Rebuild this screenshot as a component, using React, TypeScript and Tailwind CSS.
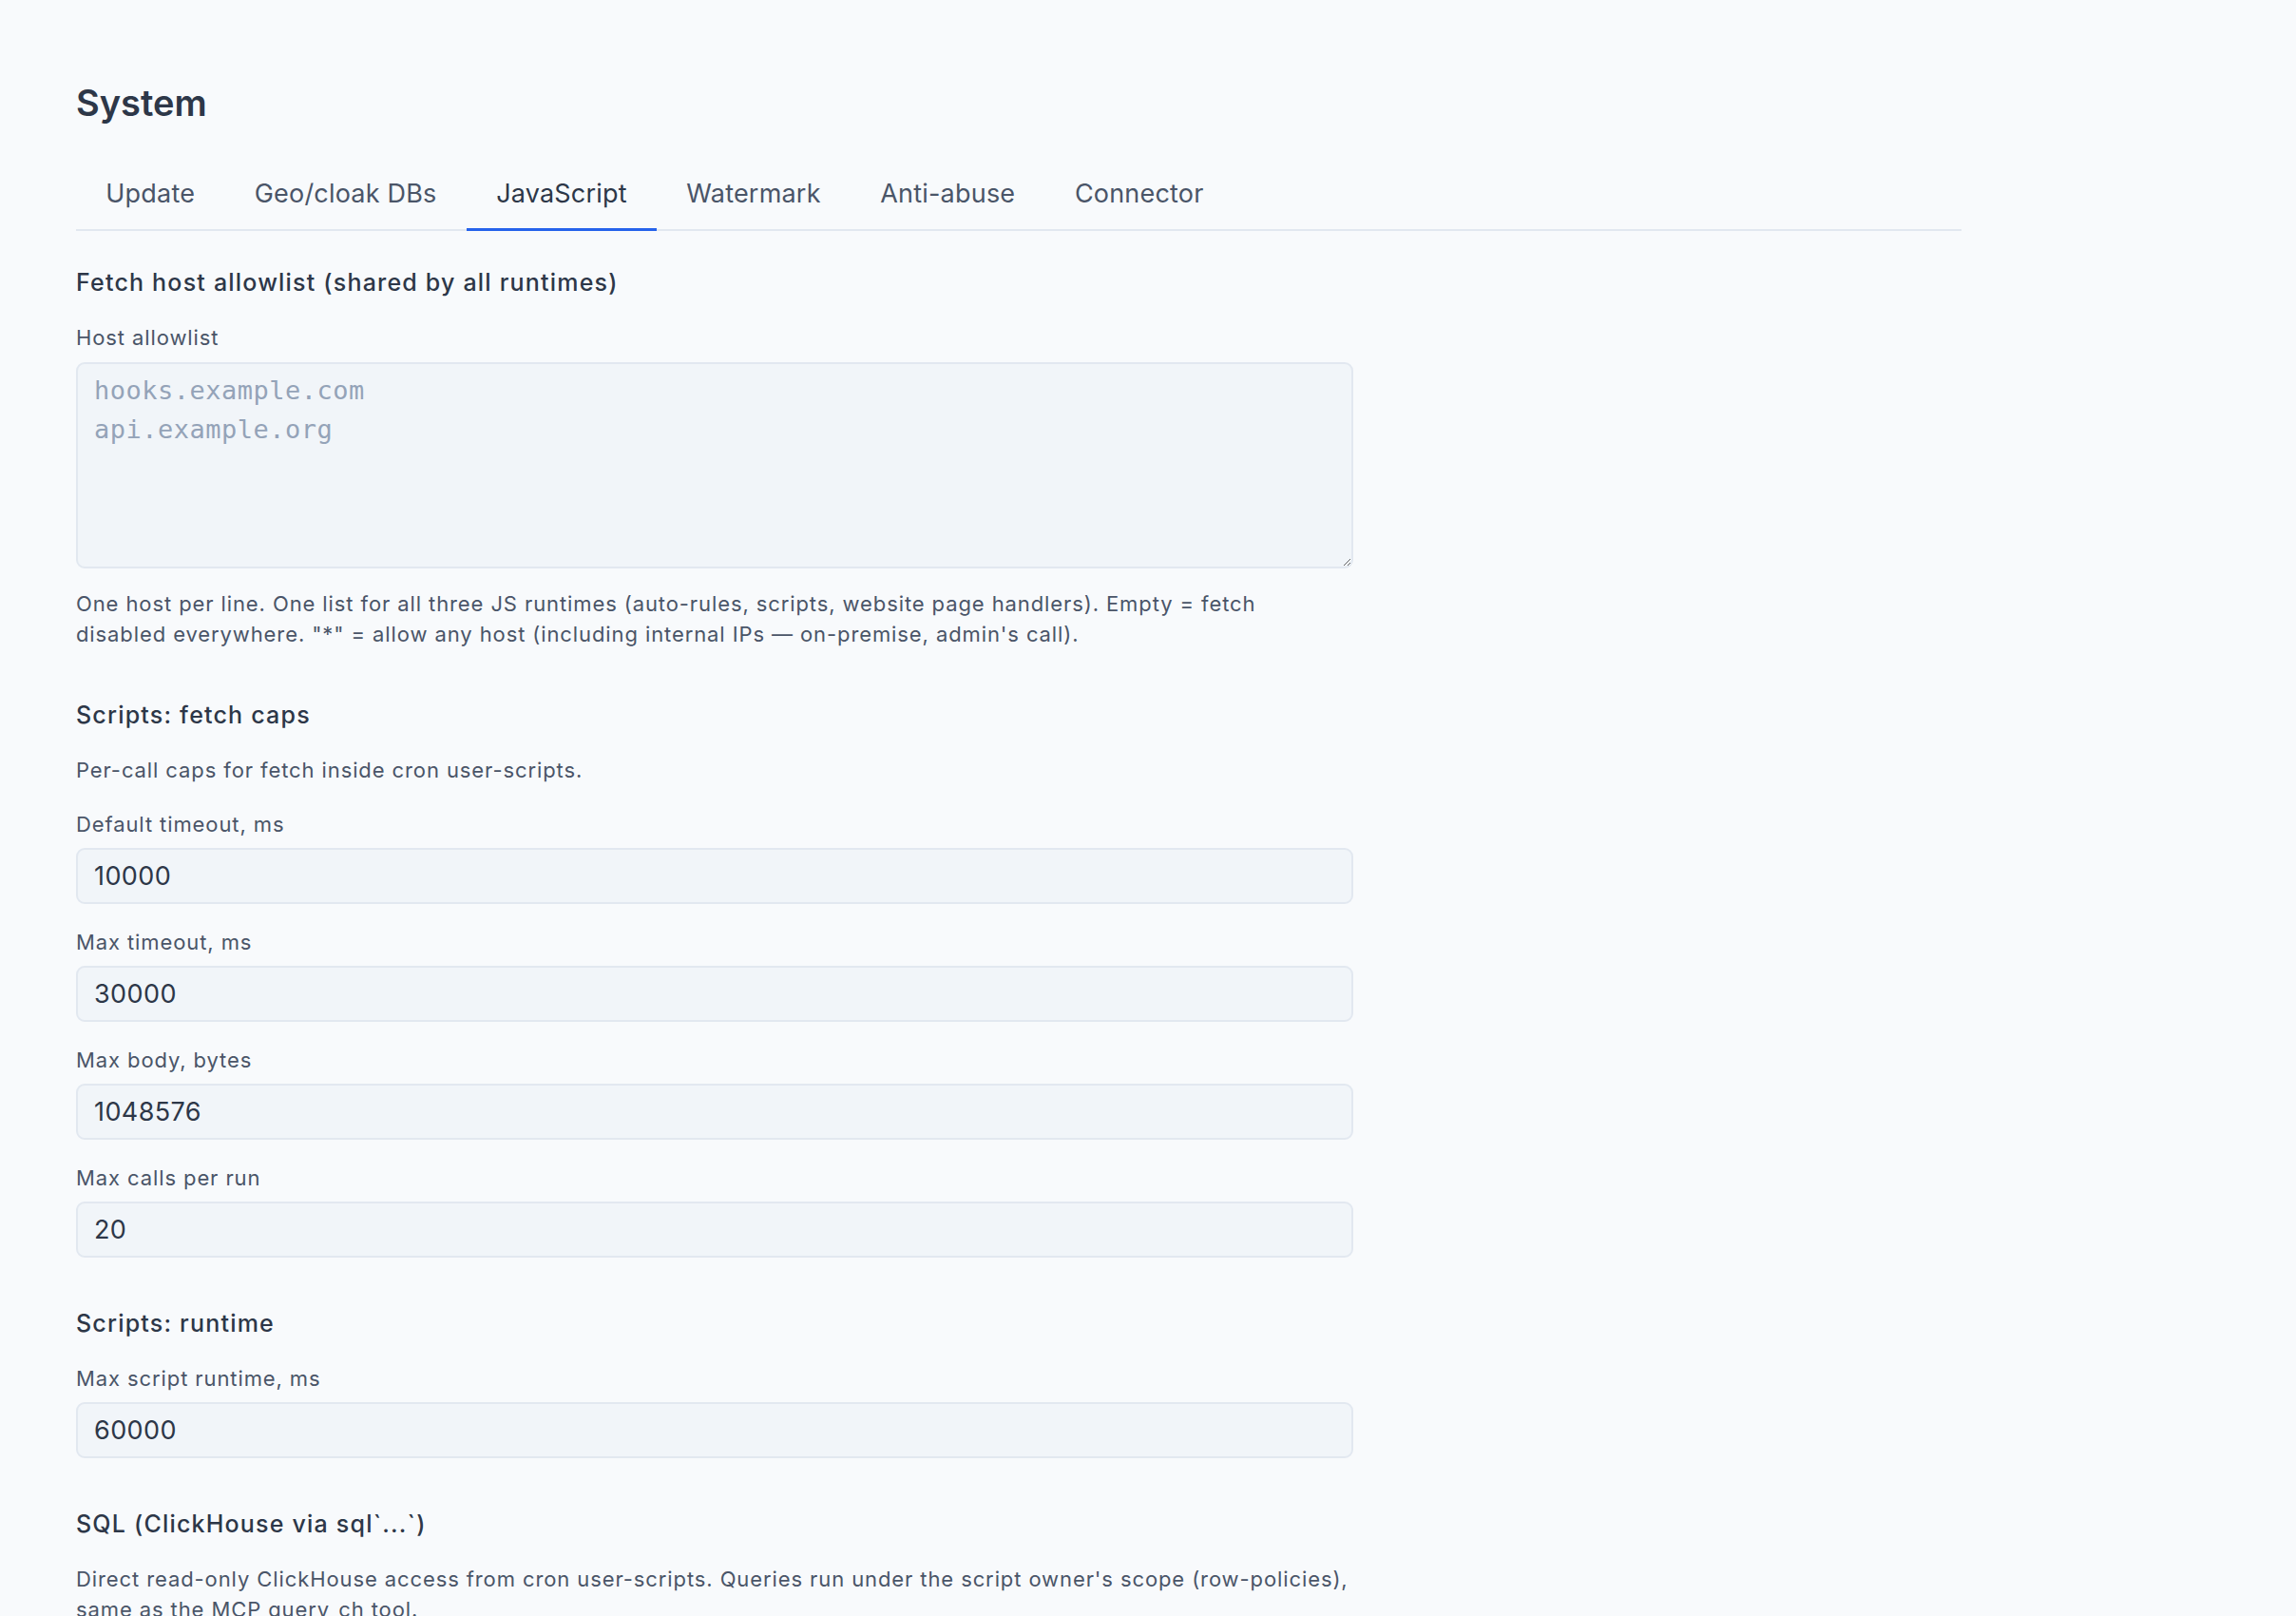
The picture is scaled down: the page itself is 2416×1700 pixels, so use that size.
import React from "react";

const tabs = ["Update", "Geo/cloak DBs", "JavaScript", "Watermark", "Anti-abuse", "Connector"];

type FieldProps = {
  label: string;
  value: string;
};

const Field = ({ label, value }: FieldProps) => (
  <label className="flex flex-col">
    <span className="mb-[9px] text-[22px] leading-[32px] tracking-[0.9px] text-[#4a5568]">{label}</span>
    <input
      defaultValue={value}
      className="h-[59px] w-full rounded-[9px] border-2 border-[#e2e8f0] bg-[#f1f5f9] px-[17px] text-[27px] tracking-[0.4px] text-[#2d3748] outline-none"
    />
  </label>
);

type SectionProps = {
  title: string;
  children: React.ReactNode;
};

const Section = ({ title, children }: SectionProps) => (
  <section className="flex flex-col">
    <h3 className="mb-[24px] text-[25px] leading-[36px] font-medium tracking-[1.2px] text-[#2d3748]">{title}</h3>
    {children}
  </section>
);

const Help = ({ children, className = "" }: { children: React.ReactNode; className?: string }) => (
  <p className={`text-[22px] leading-[32px] tracking-[0.9px] text-[#4a5568] ${className}`}>{children}</p>
);

export default function App() {
  return (
    <div className="min-h-screen bg-[#f8fafc] px-[80px] pt-[84px] pb-[80px] font-[Inter,sans-serif]">
      <div className="max-w-[1984px]">
        <h1 className="text-[38px] leading-[48px] font-semibold text-[#2d3748]">System</h1>

        <div className="mt-[33px] flex border-b-2 border-[#e2e8f0]">
          {tabs.map((t) => (
            <button
              key={t}
              className={`-mb-[2px] border-b-[3px] px-[31.3px] pt-[20px] pb-[17px] text-[27px] leading-[38px] tracking-[0.2px] ${
                t === "JavaScript" ? "border-[#2563eb] text-[#2d3748]" : "border-transparent text-[#4a5568]"
              }`}
            >
              {t}
            </button>
          ))}
        </div>

        <div className="flex max-w-[1344px] flex-col gap-[51px] pt-[36px]">
          <Section title="Fetch host allowlist (shared by all runtimes)">
            <span className="mb-[10px] text-[22px] leading-[32px] tracking-[0.9px] text-[#4a5568]">Host allowlist</span>
            <textarea
              placeholder={"hooks.example.com\napi.example.org"}
              className="h-[217px] w-full rounded-[9px] border-2 border-[#e2e8f0] bg-[#f1f5f9] px-[17px] pt-[7px] font-['DejaVu_Sans_Mono',monospace] text-[27px] leading-[41px] tracking-[0.5px] text-[#2d3748] outline-none placeholder:text-[#94a3b8]"
            />
            <Help className="mt-[21px]">
              One host per line. One list for all three JS runtimes (auto-rules, scripts, website page handlers). Empty = fetch
              <br />
              disabled everywhere. "*" = allow any host (including internal IPs — on-premise, admin's call).
            </Help>
          </Section>

          <Section title="Scripts: fetch caps">
            <Help className="mb-[25px]">Per-call caps for fetch inside cron user-scripts.</Help>
            <div className="flex flex-col gap-[24px]">
              <Field label="Default timeout, ms" value="10000" />
              <Field label="Max timeout, ms" value="30000" />
              <Field label="Max body, bytes" value="1048576" />
              <Field label="Max calls per run" value="20" />
            </div>
          </Section>

          <Section title="Scripts: runtime">
            <Field label="Max script runtime, ms" value="60000" />
          </Section>

          <Section title="SQL (ClickHouse via sql`...`)">
            <Help className="whitespace-nowrap">
              Direct read-only ClickHouse access from cron user-scripts. Queries run under the script owner's scope (row-policies),
              <br />
              same as the MCP query_ch tool.
            </Help>
          </Section>
        </div>
      </div>
    </div>
  );
}
